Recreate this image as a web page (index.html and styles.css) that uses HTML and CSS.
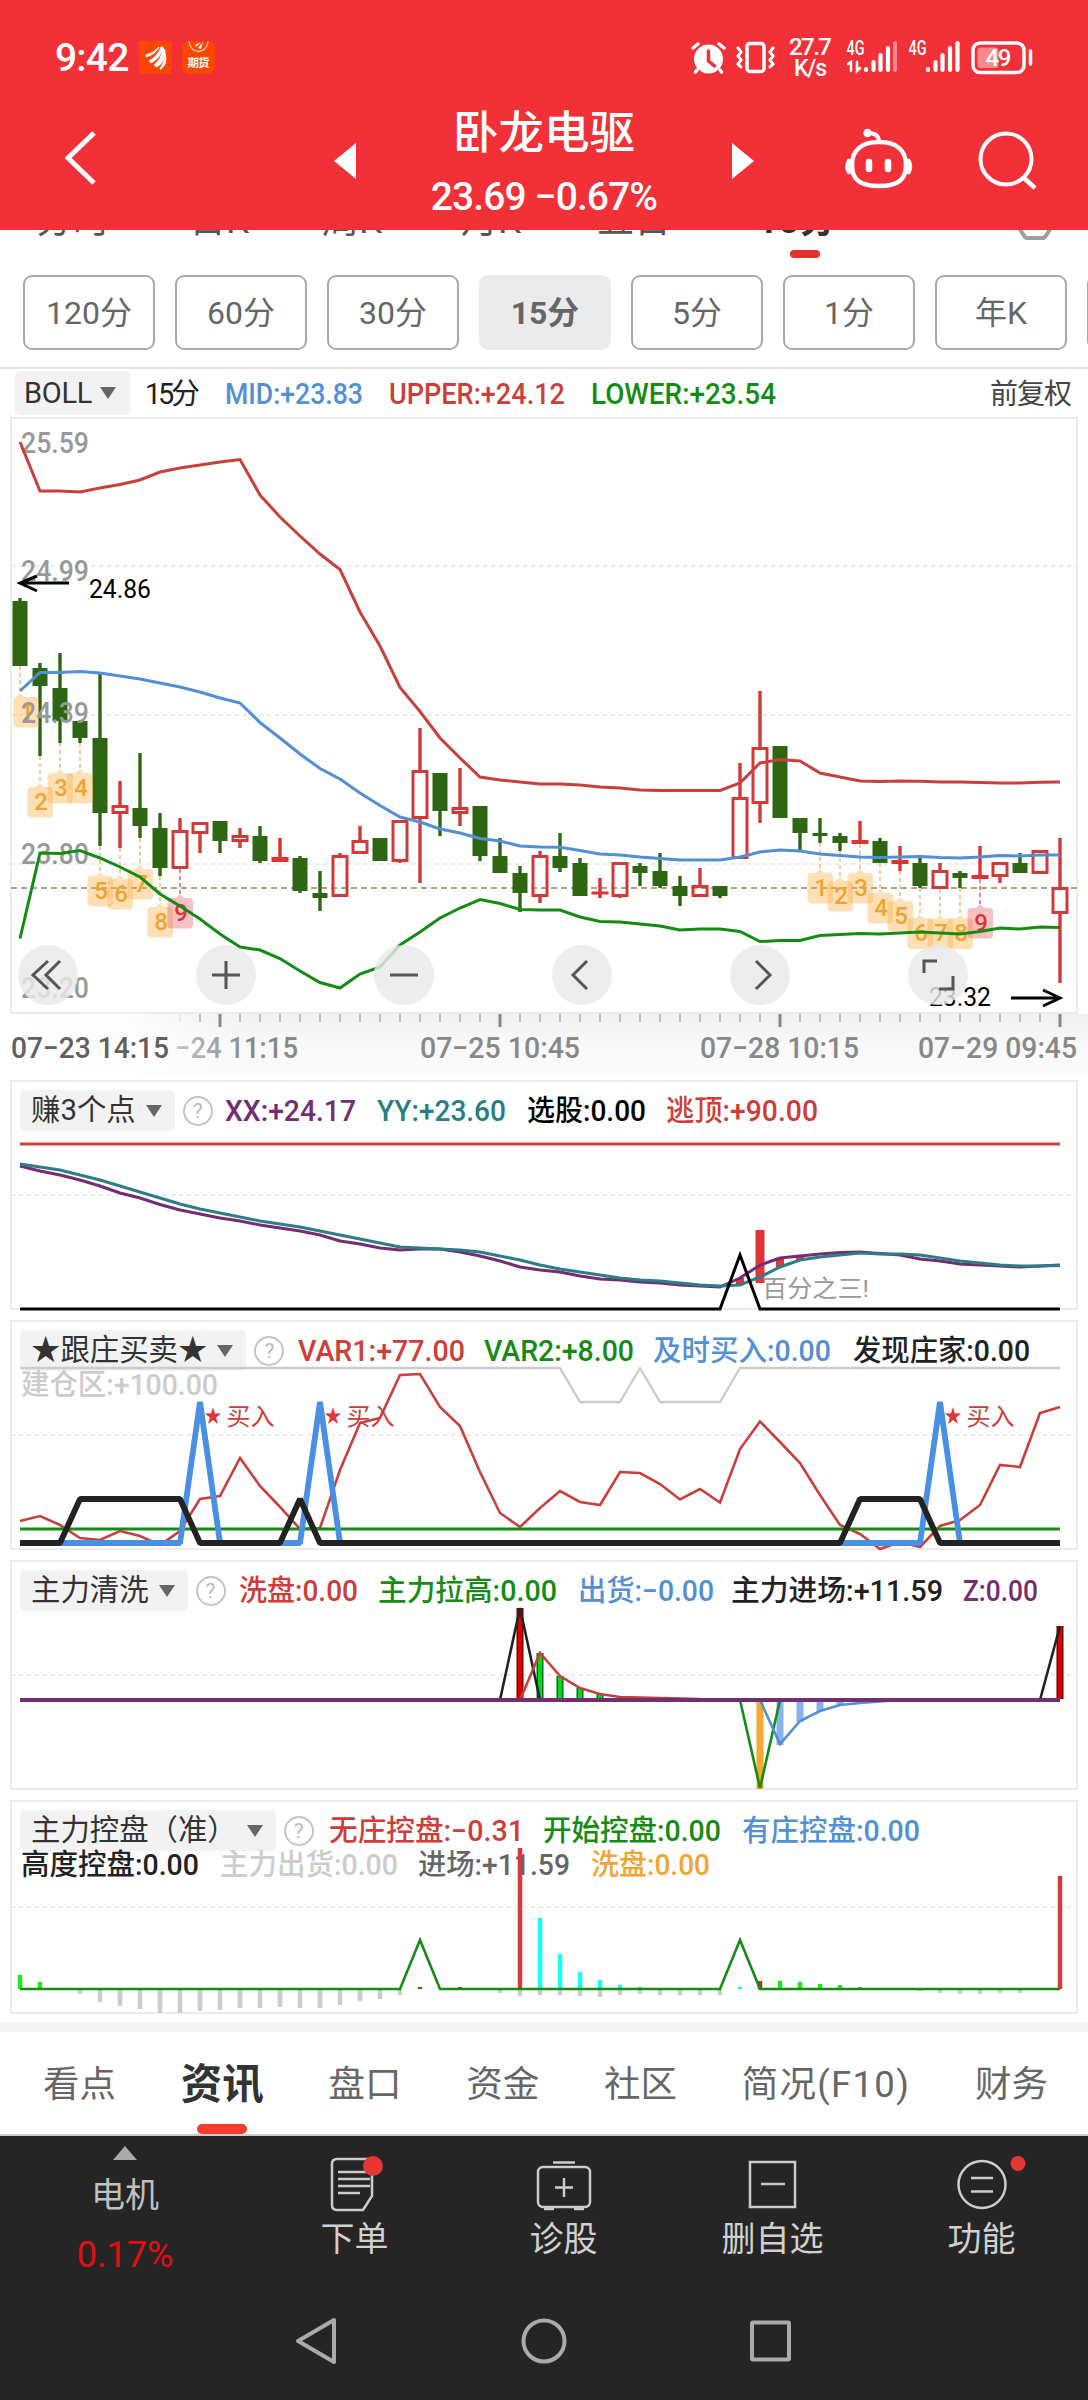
FILE: index.html
```html
<!DOCTYPE html>
<html lang="zh-CN">
<head>
    <meta charset="UTF-8">
    <meta name="viewport" content="width=device-width, initial-scale=1.0">
    <title>卧龙电驱</title>
    <link rel="stylesheet" href="styles.css">
</head>
<body>
    <header class="header">
        <div class="status-bar">
            <span class="time">9:42</span>
            <svg class="app-icon" width="33" height="33" viewBox="0 0 33 33">
                <rect width="33" height="33" fill="#ff4500"/>
                <path d="M7 14 Q15 12 20 6 Q17 13 7 16ZM10 20 Q19 15 22 6 L24 6 Q22 17 12 22ZM15 24 Q23 18 24 7 L26 9 Q27 20 18 26ZM21 28 Q26 21 26 13 Q29 22 22 28Z" fill="#fff" stroke="#fff"/>
            </svg>
            <svg class="app-icon" width="33" height="33" viewBox="0 0 33 33">
                <rect width="33" height="33" rx="7" fill="#ff4500"/>
                <path d="M7 0 A9.500 10.500 0 0 0 26 0" fill="none" stroke="#ffc9ae" stroke-width="1.300"/>
                <path d="M13 4 L19 1 L14 6ZM16 7 L21 1 L19 8Z" fill="#fff"/>
                <text x="5.500" y="26" textLength="22" class="app-text">期货</text>
            </svg>
            <svg class="status-icons" width="360" height="50" viewBox="685 34 360 50" fill="none" stroke="#fff" stroke-linecap="round">
                <circle cx="708.500" cy="59" r="14.500" fill="#fff" stroke="none"/>
                <path d="M693 48l5-4M719 44l5 4M697 70l-1.500 2M720 70l1.500 2" stroke-width="3.500"/>
                <path d="M708.500 51v10l6 5" stroke="#f13037" stroke-width="3.500"/>
                <rect x="747" y="43.500" width="17" height="28" rx="3" stroke-width="3.500"/>
                <path d="M738 48l3 4-3 4 3 4-3 4 3 3M773 48l-3 4 3 4-3 4 3 4-3 3" stroke-width="3"/>
                <g fill="#fff" stroke="none" class="status-text">
                    <text x="789" y="55" font-size="24" textLength="43">27.7</text>
                    <text x="794" y="76" font-size="23" textLength="33">K/s</text>
                    <text x="846.500" y="55" font-size="20" textLength="18" lengthAdjust="spacingAndGlyphs">4G</text>
                    <text x="908.500" y="55" font-size="20" textLength="18" lengthAdjust="spacingAndGlyphs">4G</text>
                </g>
                <path d="M848 64l3-2v9M857 62v9l3-3" stroke-width="2.500"/>
                <path d="M866 69v1M873.500 62v8M880.500 55v15M888 48v22M928 69v1M935.500 62v8M942.500 55v15M950 48v22M957.500 43v27" stroke-width="4.200"/>
                <path d="M895 43v27" stroke="#f9868a" stroke-width="4"/>
                <rect x="973" y="43" width="51" height="29.500" rx="7" stroke-width="3.500"/>
                <rect x="977.500" y="47.500" width="21" height="20.500" rx="3" fill="#f9898d" stroke="none"/>
                <path d="M1030.500 51v13" stroke-width="3.500"/>
                <text x="985.500" y="66" font-size="24" textLength="26" fill="#fff" stroke="none" class="status-text">49</text>
            </svg>
        </div>
        <div class="title-bar">
            <svg width="32" height="60" viewBox="65 128 32 60" class="back">
                <path d="M94 133L68 158l26 25" fill="none" stroke="#fff" stroke-width="5"/>
            </svg>
            <svg width="22" height="36" viewBox="0 0 22 36" class="prev"><path d="M22 0v36L0 18z" fill="#fff"/></svg>
            <div class="stock">
                <h1>卧龙电驱</h1>
                <p>23.69 −0.67%</p>
            </div>
            <svg width="22" height="36" viewBox="0 0 22 36" class="next"><path d="M0 0v36l22-18z" fill="#fff"/></svg>
            <svg width="68" height="62" viewBox="845 128 68 62" fill="none" stroke="#fff" class="robot">
                <path d="M879 142c-17 0-27 8-27 23 0 14 7 21 27 21s27-7 27-21c0-15-10-23-27-23z" stroke-width="4.500"/>
                <path d="M868 133c7 0 11 3 11 9" stroke-width="4"/>
                <circle cx="867.500" cy="133" r="4.200" fill="#fff" stroke="none"/>
                <path d="M849 161q-3 6 0 11M908.500 161q3 6 0 11" stroke-width="4.500" stroke-linecap="round"/>
                <path d="M869 162v7M888 162v7" stroke-width="6.500" stroke-linecap="round"/>
            </svg>
            <svg width="60" height="60" viewBox="977 130 60 60" fill="none" stroke="#fff" class="search">
                <circle cx="1006" cy="159" r="25.500" stroke-width="4"/>
                <path d="M1024 178l11 10" stroke-width="4.500"/>
            </svg>
        </div>
    </header>

    <nav class="period-tabs">
        <span>分时</span><span>日K</span><span>周K</span><span>月K</span><span>五日</span><span class="active">15分</span>
        <svg width="36" height="38" viewBox="0 0 36 38"><path d="M9 2h18l7 14v10l-6 9q-1 1-2 1H10q-1 0-2-1L2 26V16z" fill="none" stroke="#888" stroke-width="4"/></svg>
    </nav>
    <div class="minutes">
        <span>120分</span><span>60分</span><span>30分</span><span class="active">15分</span><span>5分</span><span>1分</span><span>年K</span><span></span>
    </div>

    <section class="quote">
        <button class="picker">BOLL<i class="caret"></i></button>
        <svg class="quote-text" id="quote" width="948" height="45" viewBox="140 371 948 45"></svg>
    </section>

    <section class="main-chart">
        <svg id="kline" width="1088" height="660" viewBox="0 415 1088 660"></svg>
        <div class="tools">
            <span><svg viewBox="0 0 60 60"><path d="M30 16L15 30l15 14M42 16L28 30l14 14"/></svg></span>
            <span><svg viewBox="0 0 60 60"><path d="M30 16v28M16 30h28"/></svg></span>
            <span><svg viewBox="0 0 60 60"><path d="M16 30h28"/></svg></span>
            <span><svg viewBox="0 0 60 60"><path d="M35 16L21 30l14 14"/></svg></span>
            <span><svg viewBox="0 0 60 60"><path d="M26 16l14 14-14 14"/></svg></span>
            <span><svg viewBox="0 0 60 60"><path d="M16 28V16h13M45 31v13H31"/></svg></span>
        </div>
    </section>

    <section class="panel">
        <div class="panel-head"><button class="picker">赚3个点<i class="caret"></i></button><i class="help">?</i></div>
        <svg id="p1" width="1088" height="240" viewBox="0 1075 1088 240"></svg>
    </section>
    <section class="panel">
        <div class="panel-head"><button class="picker">★跟庄买卖★<i class="caret"></i></button><i class="help">?</i></div>
        <svg id="p2" width="1088" height="240" viewBox="0 1315 1088 240"></svg>
    </section>
    <section class="panel">
        <div class="panel-head"><button class="picker">主力清洗<i class="caret"></i></button><i class="help">?</i></div>
        <svg id="p3" width="1088" height="240" viewBox="0 1555 1088 240"></svg>
    </section>
    <section class="panel">
        <div class="panel-head"><button class="picker">主力控盘（准）<i class="caret"></i></button><i class="help">?</i></div>
        <svg id="p4" width="1088" height="227" viewBox="0 1795 1088 227"></svg>
    </section>

    <nav class="info-tabs">
        <span>看点</span><span class="active">资讯</span><span>盘口</span><span>资金</span><span>社区</span><span class="wide">简况(F10)</span><span>财务</span>
    </nav>

    <footer class="footer">
        <div class="actions">
            <div class="sector">
                <i class="up"></i>
                <span>电机</span>
                <b>0.17%</b>
            </div>
            <div class="action">
                <svg width="56" height="60" viewBox="0 0 56 60">
                    <path d="M10 5h31q4 0 4 4v33L36 56H10q-5 0-5-5V10q0-5 5-5z"/>
                    <path d="M11 18h32M11 25h32M11 32h32M11 39h22"/>
                    <circle cx="46" cy="12" r="10" class="dot"/>
                </svg>
                <span>下单</span>
            </div>
            <div class="action">
                <svg width="56" height="60" viewBox="0 0 56 60">
                    <rect x="2" y="13" width="52" height="40" rx="5"/>
                    <path d="M17 8.500h22M28 24v19M19 33.500h18M8 55h10M38 55h10"/>
                </svg>
                <span>诊股</span>
            </div>
            <div class="action">
                <svg width="56" height="60" viewBox="0 0 56 60">
                    <rect x="5" y="8" width="45" height="45"/>
                    <path d="M16 30h24"/>
                </svg>
                <span>删自选</span>
            </div>
            <div class="action">
                <svg width="56" height="60" viewBox="0 0 56 60">
                    <circle cx="28" cy="30.500" r="23.500"/>
                    <path d="M17 24h22M17 37.500h22"/>
                    <circle cx="64" cy="9.500" r="7.500" class="dot"/>
                </svg>
                <span>功能</span>
            </div>
        </div>
        <div class="system-nav">
            <svg width="48" height="50" viewBox="0 0 48 50"><path d="M41 4v42L5 25z"/></svg>
            <svg width="50" height="50" viewBox="0 0 50 50"><circle cx="25" cy="25" r="20.500"/></svg>
            <svg width="48" height="50" viewBox="0 0 48 50"><rect x="5" y="6.500" width="37" height="37" rx="1"/></svg>
        </div>
    </footer>

    <script src="script.js"></script>
</body>
</html>
```
FILE: styles.css
```css
* {
    box-sizing: border-box;
}
body {
    margin: 0;
    width: 1088px;
    height: 2400px;
    overflow: hidden;
    background: #fff;
    font-family: Roboto, "Noto Sans CJK SC", sans-serif;
    color: #666;
}
svg {
    display: block;
    flex: none;
}
svg text {
    font-family: Roboto, "Noto Sans CJK SC", sans-serif;
}

/* header */
.header {
    position: relative;
    z-index: 1;
    height: 230px;
    background: #f13037;
    color: #fff;
}
.status-bar {
    display: flex;
    align-items: flex-start;
    height: 84px;
    padding: 34px 43px 0 55px;
}
.time {
    width: 84px;
    font-size: 39px;
    font-weight: 500;
    line-height: 48px;
    letter-spacing: -0.8px;
}
.app-icon {
    margin: 7px 10px 0 0;
}
.app-text {
    font-size: 11.5px;
    font-weight: 700;
    fill: #fff;
}
.status-icons {
    margin-left: auto;
}
.status-text {
    font-weight: 500;
}
.title-bar {
    display: flex;
    align-items: flex-start;
    padding-left: 65px;
}
.back { margin-top: 44px; }
.prev { margin: 59px 0 0 237px; }
.next { margin-top: 59px; }
.robot { margin: 44px 0 0 91px; }
.search { margin: 46px 0 0 64px; }
.stock {
    width: 376px;
    text-align: center;
}
.stock h1 {
    margin: 17px 0 0;
    font-size: 45.5px;
    font-weight: 500;
    line-height: 66px;
}
.stock p {
    margin: 8px 0 0;
    font-size: 39px;
    font-weight: 500;
    line-height: 44px;
    letter-spacing: -0.9px;
}

/* period tabs, scrolled half under the header */
.period-tabs {
    display: grid;
    grid-template-columns: 153px 133px 139px 136px 160px 260px 36px;
    margin-top: -28px;
    padding-left: 36px;
    height: 73px;
    font-size: 37px;
    line-height: 37px;
    color: #555;
}
.period-tabs .active {
    position: relative;
    font-weight: 700;
    color: #333;
}
.period-tabs .active::after {
    content: "";
    position: absolute;
    left: 33px;
    top: 48px;
    width: 30px;
    height: 8px;
    border-radius: 4px;
    background: #e63030;
}
.period-tabs svg {
    opacity: 0.8;
}
.minutes {
    display: flex;
    gap: 20px;
    height: 94px;
    padding-left: 23px;
    overflow: hidden;
    border-bottom: 2px solid #e6e6e6;
}
.minutes span {
    flex: none;
    width: 132px;
    height: 75px;
    border: 2px solid #aaa;
    border-radius: 9px;
    text-align: center;
    font-size: 32px;
    line-height: 73px;
}
.minutes .active {
    border-color: #ebebeb;
    background: #ebebeb;
    font-weight: 700;
}

/* indicator pickers */
.picker {
    display: flex;
    align-items: center;
    gap: 10px;
    height: 41px;
    padding: 0 13px 0 11px;
    border: 0;
    border-radius: 5px;
    background: #f2f2f2;
    color: #333;
    font: 29.4px/41px Roboto, "Noto Sans CJK SC", sans-serif;
}
.caret {
    border: 8.5px solid transparent;
    border-top: 12px solid #666;
    border-bottom: 0;
}
.help {
    width: 30px;
    height: 30px;
    border: 2px solid #c4c4c4;
    border-radius: 50%;
    text-align: center;
    font: normal 21px/27px Roboto, sans-serif;
    color: #bbb;
}
.quote {
    display: flex;
    height: 46px;
    padding: 2px 0 0 15px;
}
.quote .picker {
    width: 115px;
    height: 44px;
    padding: 0 11px 0 9px;
    gap: 8px;
    font-size: 29px;
    letter-spacing: -0.3px;
}
.quote-text {
    margin-left: 10px;
}
.main-chart {
    position: relative;
}
.tools {
    position: absolute;
    left: 18px;
    top: 530px;
    display: flex;
    gap: 118px;
}
.tools span {
    width: 60px;
    height: 60px;
    border-radius: 50%;
    background: rgba(233, 233, 233, 0.82);
}
.tools path {
    fill: none;
    stroke: #555;
    stroke-width: 3;
}
.panel {
    display: grid;
}
.panel > * {
    grid-area: 1 / 1;
}
.panel > svg {
    z-index: 1;
}
.panel-head {
    display: flex;
    align-items: center;
    gap: 8px;
    height: 41px;
    margin: 15px 0 0 20px;
}

/* charts */
.legend {
    font-size: 29px;
    font-weight: 500;
}
.axis {
    font-size: 29.5px;
    font-weight: 500;
    fill: #999;
}
.date {
    fill: #888;
}
.now {
    fill: #606060;
}
.mark {
    font-size: 25px;
    fill: #000;
}
.tag {
    font-size: 24px;
    font-weight: 500;
    text-anchor: middle;
}
.note {
    font-size: 24px;
}

/* info tabs */
.info-tabs {
    display: flex;
    justify-content: space-between;
    height: 114px;
    padding: 0 40px 0 43px;
    border-top: 10px solid #f4f4f4;
    border-bottom: 2px solid #ccc;
    font-size: 36.5px;
    line-height: 106px;
    white-space: nowrap;
}
.info-tabs .active {
    position: relative;
    font-size: 41.5px;
    font-weight: 700;
    color: #333;
}
.info-tabs .active::after {
    content: "";
    position: absolute;
    left: 16px;
    top: 92px;
    width: 50px;
    height: 10px;
    border-radius: 5px;
    background: #f93a2e;
}
.info-tabs .wide {
    letter-spacing: 1.3px;
}

/* footer */
.footer {
    height: 264px;
    background: #252525;
    color: #d0d0d0;
}
.actions {
    display: grid;
    grid-template-columns: 250px 209px 209px 209px 209px;
    height: 160px;
    font-size: 34px;
}
.actions > div {
    display: flex;
    flex-direction: column;
    align-items: center;
}
.sector span {
    margin-top: 10px;
    line-height: 50px;
    color: #c0c0c0;
}
.sector b {
    margin-top: 13px;
    font-size: 36px;
    font-weight: 400;
    line-height: 44px;
    color: #e01010;
}
.up {
    margin-top: 10px;
    border: 12px solid transparent;
    border-top: 0;
    border-bottom: 14px solid #aaa;
}
.action {
    padding-top: 18px;
}
.action svg {
    overflow: visible;
    fill: none;
    stroke: #ccc;
    stroke-width: 2.5;
}
.action .dot {
    fill: #e83535;
    stroke: none;
}
.action span {
    line-height: 51px;
}
.system-nav {
    display: flex;
    justify-content: center;
    gap: 178px;
    padding-top: 20px;
}
.system-nav svg {
    fill: none;
    stroke: #aaa;
    stroke-width: 4;
    stroke-linejoin: round;
}
```
FILE: script.js
```js
const RED = '#c8403c', GREEN = '#148c14', BLUE = '#528fd4', BLACK = '#222', PURPLE = '#752c72';

const xAt = i => 20 + i * 20;
const line = (pts, color, w = 3, extra = '') =>
    `<polyline points="${pts.map(p => p.join()).join(' ')}" fill="none" stroke="${color}" stroke-width="${w}" ${extra}/>`;
const series = (ys, color, w) => line(ys.map((y, i) => [xAt(i), y]), color, w);
const rect = (x, y, w, h, fill) => `<rect x="${x}" y="${y}" width="${w}" height="${h}" fill="${fill}"/>`;
const bar = (x, y1, y2, w, fill) => rect(x - w / 2, y1, w, y2 - y1, fill);
const text = (s, x1, x2, y, cls, fill = '') =>
    `<text x="${x1}" y="${y}" textLength="${x2 - x1}" lengthAdjust="spacingAndGlyphs" class="${cls}" ${fill && `fill="${fill}"`}>${s}</text>`;
const legend = rows => rows.map(([s, x1, x2, y, c]) => text(s, x1, x2, y, 'legend', c)).join('');
const frame = (y1, y2) => `<rect x="11" y="${y1}" width="1066" height="${y2 - y1}" fill="none" stroke="#ececec" stroke-width="2"/>`;
const grid = y => `<path d="M11 ${y}H1077" stroke="#e4e4e4" stroke-width="1.500" stroke-dasharray="4 4"/>`;
const put = (id, html) => { document.getElementById(id).innerHTML = html; };

put('quote', legend([
    ['MID:+23.83', 225, 363, 404, BLUE],
    ['UPPER:+24.12', 389, 565, 404, RED],
    ['LOWER:+23.54', 591, 776, 404, GREEN]
]) + '<text x="145" y="404" textLength="55" font-size="29" fill="#222">15分</text>'
    + '<text x="990" y="404" textLength="82" font-size="28" fill="#444">前复权</text>');

// Bollinger bands
const upper = [442,491,491,492,488,484.5,480,472,468,465,462,459.5,495,517,536,554,569.5,612,646,687.5,711.5,738,758,777,780,782,784,784,785,787,788,790,790.5,790.5,790.5,790.5,783,763,759.5,761,773,777,781,781.5,781,781.3,782,782,782.5,783,783,782.3,782];
const mid = [691,672.5,672.5,671.5,673,676,679,683,687,692,698,703,722.5,738,754,768.5,779,793,805.5,817,822,829,833,838.5,841,846,847,847.3,850.5,854,855,857,858.5,860,860,860,857,852,850,851,854,855.5,857,857.5,857,856.5,857.5,858,857,855.5,856,855,855];
const lower = [938.5,853,853.5,850.5,858,867,877,894,906,919,934,947,950,958.5,971,982.5,988,974,967,945,932,918,908,899.5,903.5,909.5,910,910,917,921.5,922,924,926,930,929,929,931.5,941.5,940.5,940.5,935.5,934.5,933.5,934,933,932,933,934,931.5,928,929,927,927.5];

// [direction, high, body top, body bottom, low]
const candles = [
    ['g',598,601,666,666],['g',663,668,686,756],['g',653,688,721,743],['g',721,721,738,743],['g',674,738,813,846],
    ['r',781,805,814,848],['g',753,808,826,838],['g',813,828,868,876],['r',818,830,869,869],['r',822,822,834,853],
    ['g',821,821,841,853],['r',828,835,842,848],['g',826,836,861,863],['r',838,857,862,862],['g',856,858,891,893],
    ['g',871,893,898,911],['r',853,855,897,897],['r',826,840,854,854],['g',838,838,861,861],['r',820,820,862,863],
    ['r',728,770,819,883],['g',773,773,811,836],['r',768,807,814,826],['g',806,806,856,861],['g',838,856,873,873],
    ['g',866,873,893,912],['r',851,855,897,903],['g',833,856,868,872],['g',858,863,896,896],['r',878,891.5,894.5,898],
    ['r',862,862,897,898],['g',863,866,873,886],['g',853,871,886,888],['g',876,886,896,906],['r',868,885,897,897],
    ['g',886,886,896,898],['r',763,797,859,859],['r',691,747,804,823],['g',746,746,818,818],['g',818,818,833,850],
    ['g',818,833,836,843],['g',833,836,843,851],['r',821,840,844,844],['g',838,841,863,863],['r',846,860,864,871],
    ['g',858,863,886,888],['r',863,870,889,889],['g',871,873,878,888],['r',846,875,879,879],['r',862,862,877,883],
    ['g',853,863,873,873],['r',850,850,874,874],['r',838,887,914,983]
];
// [number, candle, tag tip]
const tags = [
    [1,0,693],[2,1,783],[3,2,769],[4,3,769],[5,4,872],[6,5,875],[7,6,865],[8,7,903],[9,8,894],
    [1,40,869],[2,41,877],[3,42,869],[4,43,889],[5,44,897],[6,45,914.5],[7,46,914.5],[8,47,914.5],[9,48,904]
];

const drawCandle = ([dir, hi, top, bot, lo], i) => {
    const x = xAt(i);
    if (dir === 'g') return bar(x, hi, lo, 3.4, '#2f6614') + bar(x, top, bot, 15, '#2f6614');
    if (bot - top < 6) return bar(x, hi, lo, 3.4, '#dc3232') + bar(x, top, bot, 17, '#dc3232');
    return bar(x, hi, top, 3.4, '#d23a3a') + bar(x, bot, lo, 3.4, '#d23a3a') +
        `<rect x="${x - 7}" y="${top + 1.5}" width="14" height="${bot - top - 3}" fill="none" stroke="#d23a3a" stroke-width="3"/>`;
};
const drawTag = ([n, i, y]) => {
    const x = i ? xAt(i) : 26, hot = n === 9;
    return `<path d="M${xAt(i)} ${candles[i][4]}V${y}" stroke="${hot ? '#d89098' : '#e8cf9a'}" stroke-width="2" stroke-dasharray="4 3"/>` +
        `<g fill="${hot ? '#e85d65' : '#fbb040'}" opacity=".38"><rect x="${x - 12.5}" y="${y + 4}" width="25.500" height="30.500" rx="4"/><path d="M${xAt(i) - 4} ${y + 4}l4-4 4 4z"/></g>` +
        `<text x="${x + 1}" y="${y + 26.5}" class="tag" fill="${hot ? '#dc3232' : '#f0a32f'}">${n}</text>`;
};

let ticks = '';
for (let i = 8; i <= 52; i++) {
    const major = [10, 24, 38, 52].includes(i);
    ticks += bar(xAt(i), 1014, major ? 1027 : 1022, major ? 3 : 1, i === 8 ? '#ddd' : '#888');
}

put('kline', `
    <defs>
        <linearGradient id="fade" x2="0" y2="1"><stop stop-color="#f0f0f0"/><stop offset=".5" stop-color="#f9f9f9"/><stop offset="1" stop-color="#fafafa"/></linearGradient>
        <linearGradient id="cover"><stop stop-color="#fff"/><stop offset=".5" stop-color="#fff" stop-opacity=".85"/><stop offset="1" stop-color="#fff" stop-opacity="0"/></linearGradient>
    </defs>
    <rect x="0" y="1014" width="1088" height="61" fill="url(#fade)"/>
    ${text('−24 11:15', 175, 298, 1058, 'axis date')}
    <rect x="0" y="1014" width="250" height="61" fill="url(#cover)"/>
    ${frame(418, 1013)}${grid(566)}${grid(715)}${grid(864)}${ticks}
    <path d="M11 888H1077" stroke="#b5a17a" stroke-width="2" stroke-dasharray="6 4"/>
    ${candles.map(drawCandle).join('')}
    ${tags.map(drawTag).join('')}
    ${text('25.59', 21, 89, 453, 'axis')}${text('24.99', 21, 89, 581, 'axis')}${text('24.39', 21, 89, 723, 'axis')}
    ${text('23.80', 21, 89, 864, 'axis')}${text('23.20', 21, 89, 998, 'axis')}
    ${series(upper, RED)}${series(mid, BLUE)}${series(lower, GREEN)}
    <path d="M69 583H20M37 576L20 583l17 8M1011 998h49M1043 990l17 8-17 8" fill="none" stroke="#000" stroke-width="3"/>
    ${text('24.86', 89, 151, 598, 'mark')}${text('23.32', 929, 991, 1006, 'mark')}
    ${text('07−23 14:15', 11, 169, 1058, 'axis now')}${text('07−25 10:45', 420, 580, 1058, 'axis date')}
    ${text('07−28 10:15', 700, 859, 1058, 'axis date')}${text('07−29 09:45', 918, 1077, 1058, 'axis date')}`);

// 赚3个点
const xx = [1166,1171,1175,1180,1186,1193,1198,1204.5,1210,1214,1218,1221,1225,1228,1231,1235,1241,1244,1248,1250,1249,1249,1252,1256,1261,1267,1270,1272,1276,1279,1280,1282,1283,1285,1286,1287,1278,1265,1258,1256,1254,1252.5,1252,1253.5,1255,1259,1261,1264,1265,1266,1267,1266,1265];
const yy = [1164,1167,1170,1175,1180,1186,1192,1198,1204,1209,1213,1217,1221,1224,1227,1231,1235,1239,1243,1247,1248,1249,1250,1252,1256,1260,1265,1269,1272,1275,1278,1280,1281,1283,1285,1286,1285,1277,1267,1260,1257,1255,1253,1254,1254,1255,1258,1261,1263,1265,1266,1266,1265.5];
put('p1', frame(1081, 1309) + grid(1195) + legend([
    ['XX:+24.17', 225, 356, 1121, PURPLE],
    ['YY:+23.60', 377, 506, 1121, '#268082'],
    ['选股:0.00', 527, 646, 1121, '#000'],
    ['逃顶:+90.00', 666, 818, 1121, '#d03c39']
]) + line([[20, 1144], [1060, 1144]], '#d0403c', 3)
    + bar(740, 1278, 1285, 8, '#e23434') + bar(760, 1230, 1283, 9, '#e23434') + bar(780, 1259, 1267, 8, '#e23434') + bar(800, 1256, 1260, 8, '#e23434')
    + series(xx, PURPLE) + series(yy, '#2d7d86')
    + line([[20, 1309], [720, 1309], [740, 1255], [760, 1309], [1060, 1309]], '#000')
    + text('百分之三!', 762, 869, 1297, 'note', '#999'));

// ★跟庄买卖★
const var1 = [1521,1516,1525,1538,1540,1531,1536,1545,1531,1499,1496,1458,1486,1507,1529,1528,1470,1423,1418,1375,1374,1407,1426,1472,1513,1527,1508,1491,1502,1505,1472,1473,1484,1499.5,1489,1502.5,1449,1421.5,1442,1463,1495,1525,1534,1549,1542,1547,1526,1520,1505,1465,1467,1413,1407];
const buy = x => `<text x="${x}" y="1423" font-size="19" textLength="17" lengthAdjust="spacingAndGlyphs" fill="#e23434">★</text>` + text('买入', x + 22, x + 70, 1425, 'note', '#c8403c');
put('p2', frame(1321, 1549) + grid(1435) + legend([
    ['VAR1:+77.00', 298, 465, 1361, '#d03c39'],
    ['VAR2:+8.00', 484, 634, 1361, GREEN],
    ['及时买入:0.00', 653, 831, 1361, BLUE],
    ['发现庄家:0.00', 853, 1030, 1361, BLACK],
    ['建仓区:+100.00', 21, 218, 1395, '#ccc']
]) + line([[20, 1368], [560, 1368], [580, 1402], [620, 1402], [640, 1368], [660, 1402], [720, 1402], [740, 1368], [1060, 1368]], '#ccc', 2.4)
    + series(var1, RED, 2.6) + line([[20, 1529], [1060, 1529]], GREEN)
    + [[60, 200], [280, 320], [840, 940]].map(([a, b]) => line([[a, 1543], [b - 20, 1543], [b, 1402], [b + 20, 1543]], '#4a90e2', 5.8, 'stroke-linejoin="bevel"')).join('')
    + line([[20, 1543], [60, 1543], [80, 1499], [180, 1499], [200, 1543], [280, 1543], [300, 1499], [320, 1543], [840, 1543], [860, 1499], [920, 1499], [940, 1543], [1060, 1543]], '#222', 5.8, 'stroke-linejoin="bevel"')
    + buy(204.5) + buy(324.5) + buy(944.5));

// 主力清洗
const edged = (x, y1, y2, fill, edge) => bar(x, y1, y2, 7, edge) + bar(x, y1, y2, 4, fill);
put('p3', frame(1561, 1789) + grid(1675) + legend([
    ['洗盘:0.00', 239, 358, 1601, '#d03c39'],
    ['主力拉高:0.00', 378, 557, 1601, GREEN],
    ['出货:−0.00', 578, 714, 1601, BLUE],
    ['主力进场:+11.59', 731, 943, 1601, BLACK],
    ['Z:0.00', 963, 1038, 1601, PURPLE]
]) + edged(520, 1608, 1699, '#d00', '#700') + edged(1060, 1626, 1699, '#d00', '#700')
    + [[540, 1653], [560, 1676], [580, 1688], [600, 1694]].map(([x, y]) => edged(x, y, 1699, '#0d0', '#064')).join('')
    + bar(760, 1701, 1789, 7, '#f5a830')
    + [[780, 1745], [800, 1722], [820, 1711], [840, 1705]].map(([x, y]) => bar(x, 1701, y, 7, '#86b4ee')).join('')
    + line([[500, 1700], [520, 1608], [540, 1700]], BLACK, 2.6) + line([[1040, 1700], [1060, 1626]], BLACK, 2.6)
    + line([[520, 1700], [540, 1653], [560, 1676], [580, 1688], [600, 1694], [620, 1697], [660, 1698], [700, 1699]], RED, 2.6)
    + line([[740, 1700], [760, 1788], [780, 1700]], GREEN, 2.6)
    + line([[760, 1700], [780, 1744], [800, 1721], [820, 1711], [840, 1705], [860, 1703], [900, 1700]], BLUE, 2.6)
    + line([[20, 1700], [1060, 1700]], '#70306e', 4));

// 主力控盘
const grey = [[4,1994],[5,2002],[6,2006],[7,2009],[8,2013],[9,2013],[10,2011],[11,2010],[12,2008],[13,2008],[14,2007],[15,2008],[16,2008],[17,2005],[18,2001],[19,1999],[20,1995],
    [25,1993],[26,1996],[27,1995],[28,1995],[29,1996],[30,1997],[31,1995],[32,1994],[33,1995],[34,1995],[35,1995],[36,1995],[46,1991],[47,1993],[48,1994],[49,1994],[50,1993],[51,1993]];
put('p4', frame(1801, 2013) + grid(1907) + legend([
    ['无庄控盘:−0.31', 329, 524, 1841, '#d03c39'],
    ['开始控盘:0.00', 543, 721, 1841, GREEN],
    ['有庄控盘:0.00', 742, 920, 1841, BLUE],
    ['高度控盘:0.00', 21, 199, 1875, BLACK],
    ['主力出货:0.00', 220, 398, 1875, '#ccc'],
    ['进场:+11.59', 418, 570, 1875, '#666'],
    ['洗盘:0.00', 591, 710, 1875, '#f0a535']
]) + grey.map(([i, y]) => bar(i * 20, 1989, y, 4.5, '#ccc')).join('')
    + [[20, 1975], [40, 1982], [780, 1981], [800, 1982], [820, 1984], [840, 1985], [860, 1987]].map(([x, y]) => bar(x, y, 1989, 4.5, '#1ee81e')).join('')
    + [[540, 1918], [560, 1954], [580, 1972], [600, 1980], [620, 1985], [640, 1987], [740, 1987]].map(([x, y]) => bar(x, y, 1989, 4.5, '#1ff')).join('')
    + [[420, 1987], [460, 1987], [760, 1981]].map(([x, y]) => bar(x, y, 1989, 4.5, '#b03030')).join('')
    + bar(520, 1848, 1989, 4.5, '#d63a3a') + bar(1060, 1876, 1989, 4.5, '#d63a3a')
    + line([[20, 1989], [400, 1989], [420, 1940], [440, 1989], [720, 1989], [740, 1940], [760, 1989], [1060, 1989]], GREEN, 2.6));
```
